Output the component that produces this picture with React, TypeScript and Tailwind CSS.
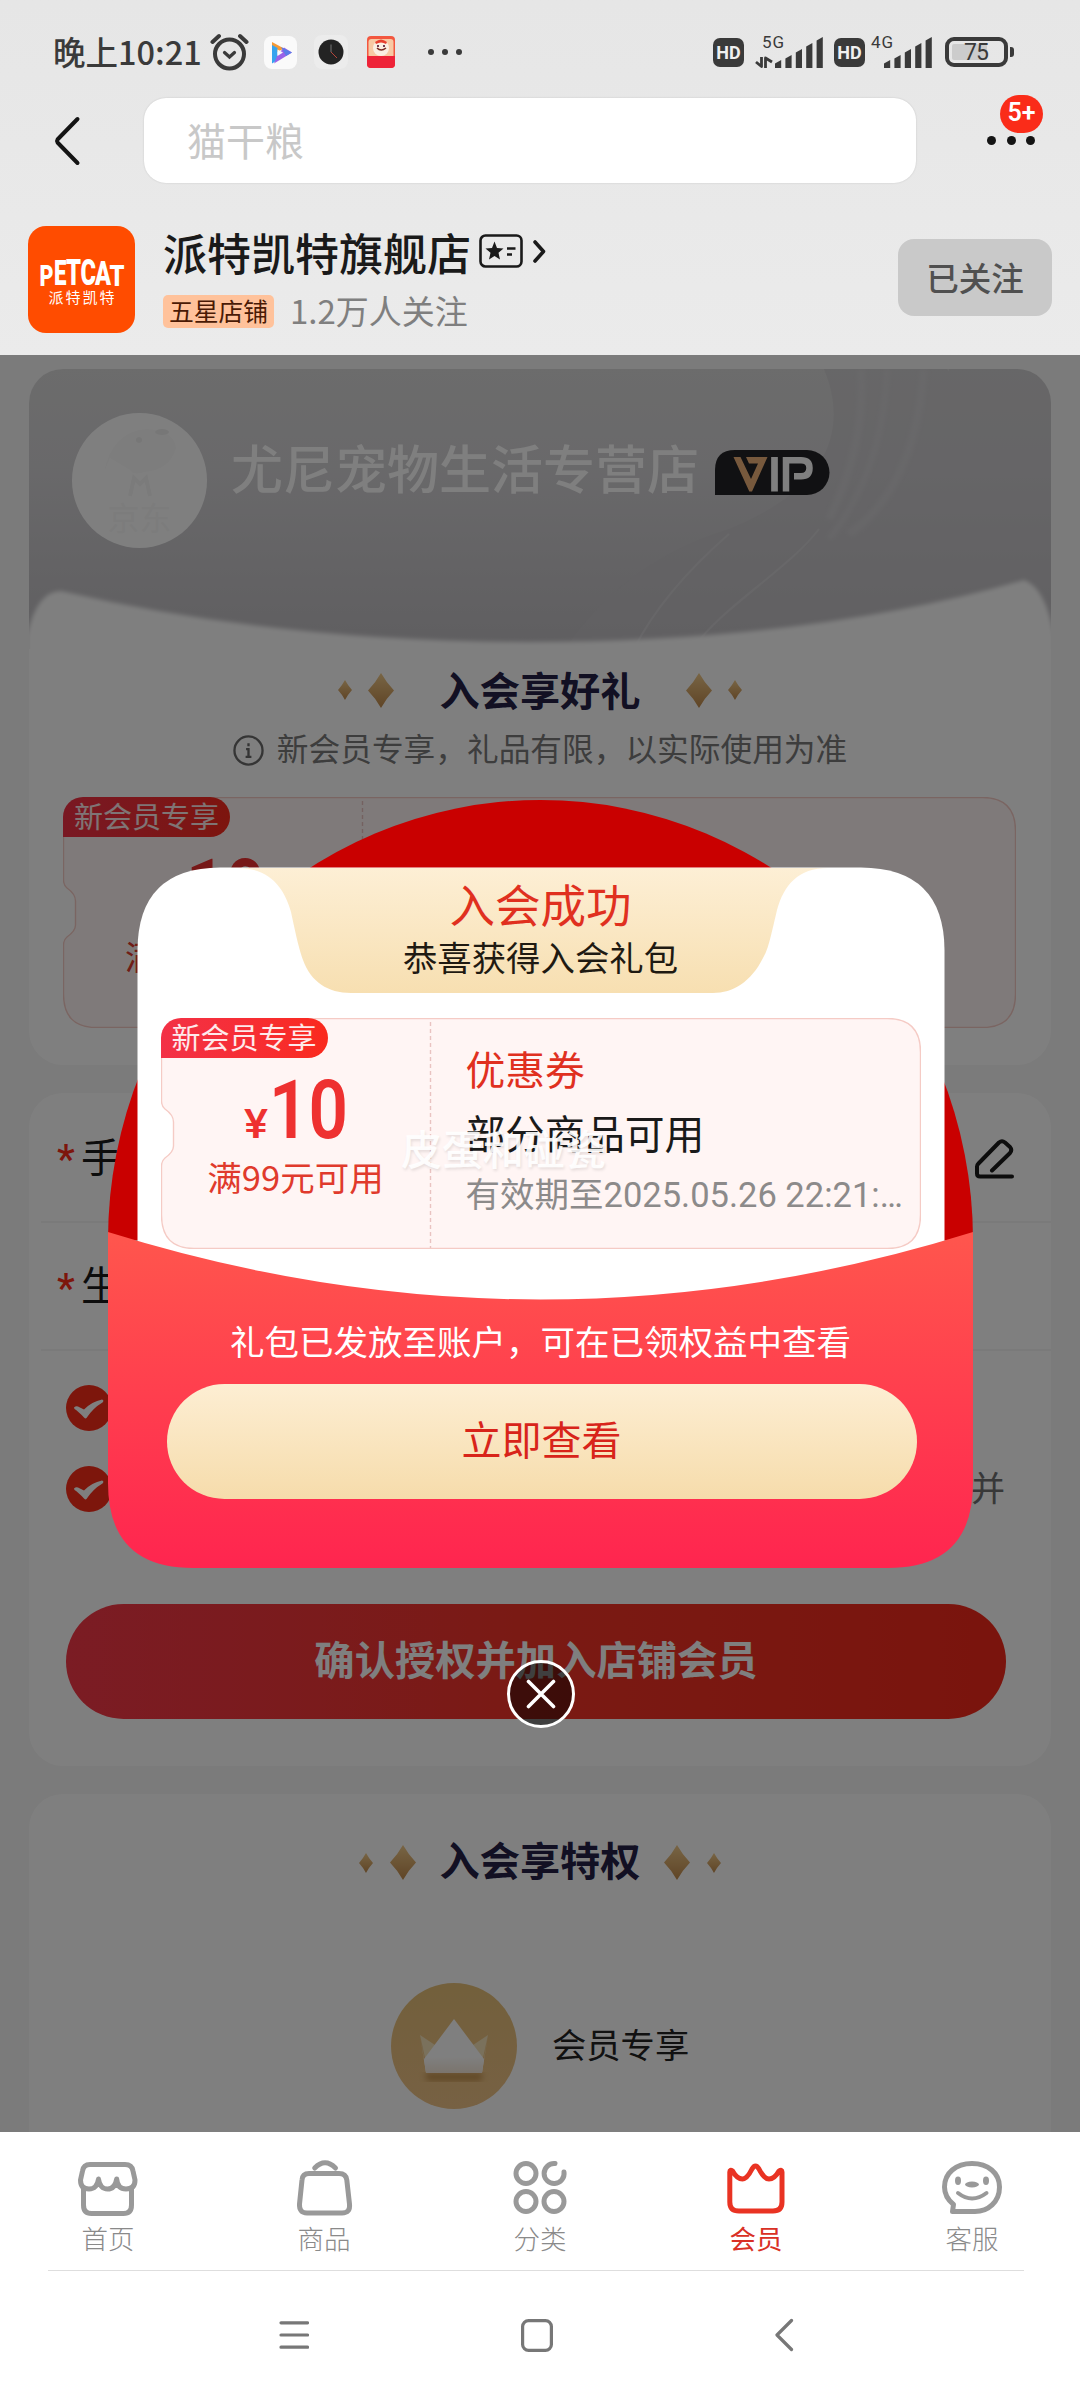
import React from "react";

function Hd() {
  return (
    <div className="flex h-[29px] w-[31px] items-center justify-center rounded-[7px] bg-[#3a3a3a] font-['Roboto',sans-serif] text-[18px] leading-[29px] font-bold text-[#f0f0f0]">
      HD
    </div>
  );
}

function Signal({ label, arrows }: { label: string; arrows?: boolean }) {
  const w = arrows ? 67 : 61;
  const start = arrows ? 19 : 13;
  return (
    <svg className="overflow-visible" width={w} height="36" viewBox={`0 0 ${w} 36`} fill="#3a3a3a">
      <text x={arrows ? 6 : 0} y="13.5" fontSize="17" fontFamily="Roboto, sans-serif" textLength="22">
        {label}
      </text>
      {arrows && (
        <path d="M0 28 L5.500 32.500 V23 M9.5 34 V24 L16 28" fill="none" stroke="#3a3a3a" strokeWidth="2.8" strokeLinejoin="round" />
      )}
      {[26, 21, 15, 9, 3].map((y, i) => (
        <path
          key={i}
          d={`M${start + i * 10.4} ${y + 3.5} L${start + i * 10.4 + 6.2} ${y} V34 H${start + i * 10.4} Z`}
          strokeLinejoin="round"
        />
      ))}
    </svg>
  );
}

function StatusBar() {
  return (
    <div className="mt-[30px] flex h-[44px] items-center pr-[66px] pl-[53px] text-[#3a3a3a]">
      <span className="-mt-[2px] w-[157px] text-[32.500px] leading-[40px] font-medium whitespace-nowrap">晚上10:21</span>
      <svg width="39" height="38" viewBox="0 0 39 38" fill="none" stroke="#3a3a3a" strokeLinecap="round">
        <circle cx="19.5" cy="21" r="14.5" strokeWidth="4" />
        <path d="M14.5 19.5 L19.5 24 L24.5 19.5" strokeWidth="3.2" />
        <path d="M2.5 9 L9 3 M36.500 9 L30 3" strokeWidth="4" />
      </svg>
      <svg className="ml-[15px]" width="33" height="33" viewBox="0 0 33 33">
        <rect width="33" height="33" rx="8" fill="#fafafa" />
        <path d="M8 6 L20 12.500 L13 16 L8 13Z" fill="#f79a35" />
        <path d="M8 9 L13.500 12 V24 L8 27.500Z" fill="#36a3ee" />
        <path d="M20 11.500 L28 16.500 L10 27.500 L13.500 19Z" fill="#9a63e8" />
        <path d="M17 11 L28 16.500 L22 20Z" fill="#5a7de8" />
        <path d="M13.500 13.500 L19 16.500 L13.500 20Z" fill="#fafafa" />
      </svg>
      <svg className="ml-[17px]" width="34" height="34" viewBox="0 0 34 34">
        <rect width="34" height="34" rx="8" fill="#ececec" />
        <circle cx="17" cy="17" r="12.500" fill="#232323" />
        <path d="M17 9.500 V17" stroke="#777" strokeWidth="1" />
        <path d="M17 17 L23 23" stroke="#b5443a" strokeWidth="1" />
      </svg>
      <svg className="ml-[18px]" width="31" height="34" viewBox="0 0 31 34">
        <rect x="1" y="1" width="28" height="32" rx="4" fill="#f3573f" />
        <rect x="2.500" y="4" width="25" height="19" rx="3" fill="#f8c9a4" />
        <circle cx="15" cy="13" r="8" fill="#fbeee2" />
        <path d="M9 7 Q15 2 21 7 L20 9 Q15 6 10 9Z" fill="#e8402f" />
        <path d="M11 13 Q15 17 20 13" stroke="#7a2a22" strokeWidth="1.500" fill="none" />
        <circle cx="12" cy="11" r="1" fill="#402" />
        <circle cx="18" cy="11" r="1" fill="#402" />
        <path d="M1 21 H29 V29 Q29 33 25 33 H5 Q1 33 1 29Z" fill="#ee2338" />
      </svg>
      <div className="ml-[31px] flex gap-[8px]">
        <i className="size-[6px] rounded-full bg-[#3a3a3a]" />
        <i className="size-[6px] rounded-full bg-[#3a3a3a]" />
        <i className="size-[6px] rounded-full bg-[#3a3a3a]" />
      </div>
      <div className="ml-auto flex items-center">
        <Hd />
        <div className="ml-[12px]"><Signal label="5G" arrows /></div>
        <div className="ml-[11px]"><Hd /></div>
        <div className="ml-[6px]"><Signal label="4G" /></div>
        <div className="ml-[13px] flex h-[30px] w-[63px] items-center rounded-[9px] border-4 border-[#3a3a3a] p-[3px]">
          <div className="flex h-[16px] w-[35px] items-center rounded-[2px] bg-[#cccccc] pl-[12px]">
            <span className="pt-[2px] font-['Roboto',sans-serif] text-[23px] leading-[24px] tracking-[-1px]">75</span>
          </div>
        </div>
        <i className="ml-[2px] h-[10px] w-[4px] rounded-r-[3px] bg-[#3a3a3a]" />
      </div>
    </div>
  );
}

function Header() {
  return (
    <header className="flex h-[355px] shrink-0 flex-col bg-linear-to-b from-[#e6e6e6] to-[#ebebeb]">
      <StatusBar />
      <div className="mt-[24px] flex h-[85px] items-center pl-[53px]">
        <svg width="28" height="52" viewBox="0 0 28 52" fill="none" stroke="#141414" strokeWidth="4" strokeLinecap="round" strokeLinejoin="round">
          <path d="M24.500 4 L4.500 24.500 Q3.500 26 4.500 27.500 L24.500 48" />
        </svg>
        <div className="ml-[63px] flex h-[85px] w-[772px] items-center rounded-[22px] bg-white pb-[3px] pl-[43px] text-[39px] leading-[50px] text-[#c8c8c8] shadow-[0_0_2px_rgba(0,0,0,0.15)]">
          猫干粮
        </div>
        <div className="relative ml-[71px] flex h-[85px] items-center gap-[10.500px]">
          <i className="size-[9px] rounded-full bg-[#141414]" />
          <i className="size-[9px] rounded-full bg-[#141414]" />
          <i className="size-[9px] rounded-full bg-[#141414]" />
          <span className="absolute -top-[3px] left-[13px] h-[38px] w-[43px] rounded-full bg-[#fa2c19] text-center font-['Roboto',sans-serif] text-[25px] leading-[35px] font-semibold text-white">
            5+
          </span>
        </div>
      </div>
      <div className="mt-[43px] flex h-[107px] pl-[28px]">
        <div className="flex h-[107px] w-[107px] flex-col items-center rounded-[18px] bg-[#ff4c00] pt-[28px] text-white">
          <svg className="overflow-visible" width="87" height="32" viewBox="0 0 87 32" fill="#fff" fontFamily="Roboto, sans-serif" fontWeight="900">
            <text x="1.500" y="31.500" fontSize="30" textLength="14" lengthAdjust="spacingAndGlyphs">P</text>
            <text x="16" y="31" fontSize="35" textLength="12.500" lengthAdjust="spacingAndGlyphs">E</text>
            <text x="28" y="30.500" fontSize="37" textLength="15" lengthAdjust="spacingAndGlyphs">T</text>
            <text x="42.500" y="30.500" fontSize="36" textLength="15.500" lengthAdjust="spacingAndGlyphs">C</text>
            <text x="57" y="31" fontSize="33" textLength="16" lengthAdjust="spacingAndGlyphs">A</text>
            <text x="71.500" y="31.500" fontSize="30" textLength="15" lengthAdjust="spacingAndGlyphs">T</text>
          </svg>
          <span className="mt-[2px] pl-[2px] text-[15px] leading-[18px] tracking-[2px]">派特凯特</span>
        </div>
        <div className="ml-[28px] flex flex-col">
          <div className="flex h-[54px] items-center">
            <span className="-mt-[2px] text-[44px] leading-[54px] font-medium text-[#1a1a1a]">派特凯特旗舰店</span>
            <svg className="-mt-[4px] ml-[8px]" width="69" height="34" viewBox="0 0 69 34">
              <rect x="1.500" y="1.500" width="41" height="31" rx="5" fill="none" stroke="#1a1a1a" strokeWidth="2.600" />
              <path d="M15.500 7.500 L18 14 L24.500 14.500 L19.500 18.800 L21 25.500 L15.500 22 L10 25.500 L11.500 18.800 L6.500 14.500 L13 14Z" fill="#1a1a1a" />
              <path d="M28 14.500 H36.500 M28 20.500 H33" stroke="#1a1a1a" strokeWidth="2.400" />
              <path d="M56 8 L64.500 17.500 L56 27" fill="none" stroke="#1a1a1a" strokeWidth="3.600" strokeLinecap="round" strokeLinejoin="round" />
            </svg>
          </div>
          <div className="mt-[15px] flex h-[33px] items-center">
            <span className="flex h-[33px] w-[111px] items-center justify-center rounded-[5px] bg-[#ffc29b] pb-[3px] text-[24.800px] leading-[28px] text-[#4a1a05]">五星店铺</span>
            <span className="-mt-[4px] ml-[16px] text-[33px] leading-[36px] text-[#7f7f7f]">1.2万人关注</span>
          </div>
        </div>
        <div className="mt-[13px] mr-[28px] ml-auto flex h-[77px] w-[154px] items-center justify-center rounded-[16px] bg-[#c9c9c9] text-[32.500px] font-medium text-[#505050]">
          <span className="-mt-[1px]">已关注</span>
        </div>
      </div>
    </header>
  );
}

function Diamond({ w, h }: { w: number; h: number }) {
  return (
    <svg width={w} height={h} viewBox="0 0 26 34" preserveAspectRatio="none">
      <defs>
        <linearGradient id="gold" x1="0" y1="0" x2="0" y2="1">
          <stop offset="0" stopColor="#f0ca8a" />
          <stop offset="1" stopColor="#c08a4c" />
        </linearGradient>
      </defs>
      <path d="M13 0 Q18.500 9.500 26 17 Q18.500 24.500 13 34 Q7.500 24.500 0 17 Q7.500 9.500 13 0Z" fill="url(#gold)" />
    </svg>
  );
}

function SectionTitle({ text, wide }: { text: string; wide?: boolean }) {
  return (
    <div className="flex h-[40px] items-center justify-center">
      <div className={wide ? "mr-[46px] flex items-center gap-[16px]" : "mr-[24px] flex items-center gap-[17px] pt-[5px]"}>
        <Diamond w={14} h={20} />
        <Diamond w={26} h={35} />
      </div>
      <span className="-mt-[2px] text-[40.200px] leading-[40px] font-bold text-[#242046]">{text}</span>
      <div className={wide ? "ml-[46px] flex items-center gap-[16px]" : "ml-[24px] flex items-center gap-[17px] pt-[5px]"}>
        <Diamond w={26} h={35} />
        <Diamond w={14} h={20} />
      </div>
    </div>
  );
}

function Coupon({ width, left }: { width: number; left: number }) {
  const r = width - 0.5;
  return (
    <div className="relative h-[231px]" style={{ width }}>
      <svg className="absolute inset-0" width={width} height="231">
        <path
          d={`M33 .5 H${r - 33} Q${r} .5 ${r} 34 V197 Q${r} 230.500 ${r - 33} 230.500 H33 Q.5 230.500 .5 197 V148 Q.5 143 4 140 Q12.500 134 12.500 128 V104 Q12.500 97 4 91 Q.5 88 .5 83 V33 Q.5 .5 33 .5Z`}
          fill="#fff5f4"
          stroke="#f5cbc5"
          strokeWidth="1.400"
        />
        <path d={`M${left - 0.5} 4 V230`} stroke="#e9c3c1" strokeWidth="1.400" strokeDasharray="4 3" />
      </svg>
      <div className="relative flex h-full">
        <div className="flex shrink-0 flex-col items-center" style={{ width: left }}>
          <span className="h-[40px] w-[167px] self-start rounded-tl-[20px] rounded-r-[20px] bg-linear-to-r from-[#f33146] to-[#fa2a1c] pl-[11px] text-[29px] leading-[37px] text-white/90">
            新会员专享
          </span>
          <svg className="mt-[12px] mr-[2px] overflow-visible" width="104" height="72" viewBox="0 0 104 72" fill="#ee3130" fontFamily="Roboto, sans-serif">
            <text x="1" y="67.500" fontSize="40" fontWeight="500" textLength="24" lengthAdjust="spacingAndGlyphs">¥</text>
            <text x="26" y="68" fontSize="82" fontWeight="600" textLength="79" lengthAdjust="spacingAndGlyphs">10</text>
          </svg>
          <span className="mt-[14px] text-[34.500px] leading-[40px] text-[#e03a2c]">满99元可用</span>
        </div>
        <div className="flex flex-col pt-[29px] pl-[35px] whitespace-nowrap">
          <span className="text-[39.800px] leading-[42px] text-[#e0301f]">优惠券</span>
          <span className="mt-[22px] text-[39.800px] leading-[42px] text-[#1a1a1a]">部分商品可用</span>
          <span className="mt-[20px] font-['Roboto','Noto_Sans_CJK_SC',sans-serif] text-[34.500px] leading-[44px] text-[#8c8a8a]">
            有效期至2025.05.26 22:21:…
          </span>
        </div>
      </div>
    </div>
  );
}

function HeroArt() {
  return (
    <svg className="absolute inset-0" width="1023" height="280" viewBox="0 0 1023 280">
      <defs>
        <linearGradient id="hero" x1="0" y1="0" x2="0" y2="1">
          <stop offset="0" stopColor="#d8d8d8" />
          <stop offset=".35" stopColor="#d3d2d5" />
          <stop offset="1" stopColor="#bfbdc1" />
        </linearGradient>
        <filter id="soft"><feGaussianBlur stdDeviation="2" /></filter>
      </defs>
      <path d="M0 27 Q0 0 27 0 H996 Q1023 0 1023 27 V280 H0Z" fill="url(#hero)" />
      <path d="M795 0 C820 60 800 120 700 160 C620 185 570 230 536 280 H1023 V0 H920 C918 40 925 0 917 0Z" fill="#c6c4c8" opacity=".5" />
      <g fill="none" stroke="#dcdbde" opacity=".35" filter="url(#soft)">
        <path d="M832 0 C836 60 820 110 800 150" strokeWidth="8" />
        <path d="M858 0 C856 60 840 120 800 170" strokeWidth="6" />
        <path d="M895 0 C890 70 870 130 820 165" strokeWidth="8" />
      </g>
      <g fill="none" stroke="#dcdbde" strokeWidth="2" opacity=".45">
        <path d="M700 165 C660 200 625 240 605 280" />
        <path d="M790 160 C760 200 690 240 664 280" />
      </g>
      <path d="M-2 285 V266 Q8 222 32 222 Q250 273 500 273 Q780 273 995 211 Q1016 218 1025 266 V285Z" fill="#fff" filter="url(#soft)" />
    </svg>
  );
}

function MemberCard() {
  return (
    <section className="relative h-[696px] shrink-0 overflow-hidden rounded-[34px] bg-white">
      <HeroArt />
      <div className="relative flex h-full flex-col">
        <div className="mt-[44px] ml-[43px] flex h-[135px]">
          <div className="flex size-[135px] flex-col items-center rounded-full bg-white">
            <svg className="mt-[13px]" width="80" height="72" viewBox="0 0 80 72">
              <path d="M4 46 Q12 6 46 3 Q74 4 76 22 Q70 44 44 46 Q34 50 30 44 L10 32 Z" fill="#fbfbfb" />
              <circle cx="39" cy="14" r="3" fill="#efefef" />
              <ellipse cx="62" cy="6" rx="7" ry="3" fill="#efefef" />
              <path d="M30 70 L34 52 L40 58 L46 52 L50 70" fill="none" stroke="#f6f6f6" strokeWidth="4" />
            </svg>
            <span className="text-[32px] leading-[36px] text-[#f8f8f8]">京东</span>
          </div>
          <span className="mt-[24px] ml-[24px] text-[52px] leading-[60px] font-medium whitespace-nowrap text-white">尤尼宠物生活专营店</span>
          <svg className="mt-[37px] ml-[16px]" width="115" height="45" viewBox="0 0 115 45">
            <path d="M20 0 H92 A22.500 22.500 0 0 1 92 45 H0 V20 Q0 0 20 0Z" fill="#232326" />
            <path d="M18.500 7 H25.500 L36 29 L43 13.500 H34 L31 7 H52.500 L37 41.500 H34.300Z" fill="#efb27a" />
            <path d="M59.500 7 V41.500" stroke="#fff" strokeWidth="6.700" />
            <path d="M71 41.500 V10.300 H86 Q94.500 10.300 94.500 18 Q94.500 26.300 86 26.300 H79" fill="none" stroke="#fff" strokeWidth="6.500" />
          </svg>
        </div>
        <div className="mt-[122px]"><SectionTitle text="入会享好礼" wide /></div>
        <div className="mt-[21px] flex h-[34px] items-center justify-center gap-[13px] text-[31.700px] leading-[34px] text-[#7a7a7a]">
          <svg className="mt-[4px]" width="31" height="33" viewBox="0 0 32 32" fill="none" stroke="#6a6a6a" strokeWidth="2.400">
            <circle cx="16" cy="16" r="14.500" />
            <path d="M16 8.500 V11.500 M13.500 14.500 H16 V22.500 M13 22.500 H19" />
          </svg>
          <span className="-mt-[3px]">新会员专享，礼品有限，以实际使用为准</span>
        </div>
        <div className="mt-[32px] ml-[34px]"><Coupon width={953} left={300} /></div>
      </div>
    </section>
  );
}

function Check() {
  return (
    <svg className="shrink-0" width="46" height="46" viewBox="0 0 46 46">
      <circle cx="23" cy="23" r="23" fill="#fa2c19" />
      <path d="M8 22.500 Q10 20.500 12 21.500 L18 24.500 Q26 16.500 36 14.500 Q38.500 15.500 36.500 17.500 Q27 23 20.500 33 Q19.500 34 18 32.500 Q12 26 8.500 24Z" fill="#fff" />
    </svg>
  );
}

function Asterisk() {
  return <span className="mt-[5px] w-[24px] font-['Roboto',sans-serif] font-medium text-[#fa2c19]">*</span>;
}

function FormCard() {
  return (
    <section className="flex h-[673px] shrink-0 flex-col rounded-[34px] bg-white">
      <div className="ml-[12px] flex h-[130px] items-center border-b-2 border-[#f5f5f5] pr-[37px] pl-[16px] text-[40px] leading-[44px]">
        <Asterisk />
        <span className="-mt-[5px] text-[#1a1a1a]">手机号</span>
        <svg className="mt-[3px] ml-auto" width="39" height="40" viewBox="0 0 39 40" fill="none" stroke="#1a1a1a" strokeWidth="4" strokeLinecap="round" strokeLinejoin="round">
          <path d="M37 37.500 H5 Q2 37.500 2 34.500 V27.500 Q2 26 3.500 24.500 L24 3.500 Q27 1 30 3.500 L35 8 Q37.500 11 35 14 L17 31.500" />
        </svg>
      </div>
      <div className="ml-[12px] flex h-[128px] items-center border-b-2 border-[#f5f5f5] pl-[16px] text-[40px] leading-[44px]">
        <Asterisk />
        <span className="-mt-[6px] text-[#1a1a1a]">生日</span>
      </div>
      <div className="mt-[34px] flex h-[46px] items-center pl-[37px]"><Check /></div>
      <div className="mt-[35px] flex h-[46px] items-center justify-between pr-[46px] pl-[37px]">
        <Check />
        <span className="-mt-[5px] text-[34px] leading-[40px] text-[#707070]">并</span>
      </div>
      <div className="mt-[92px] ml-[37px] flex h-[115px] w-[940px] items-center justify-center rounded-full bg-linear-to-r from-[#f63848] via-[#f53427] to-[#f5281a] text-[40.300px] leading-[44px] font-bold text-white">
        <span className="-mt-[7px]">确认授权并加入店铺会员</span>
      </div>
    </section>
  );
}

function PrivilegeCard() {
  return (
    <section className="flex h-[340px] shrink-0 flex-col rounded-t-[34px] bg-white pt-[46px]">
      <SectionTitle text="入会享特权" />
      <div className="mt-[103px] flex h-[126px] items-center pl-[362px]">
        <svg width="126" height="126" viewBox="0 0 126 126">
          <defs>
            <linearGradient id="coin" x1="0" y1="0" x2="0" y2="1">
              <stop offset="0" stopColor="#e6c078" />
              <stop offset="1" stopColor="#eec287" />
            </linearGradient>
            <linearGradient id="crown" x1="0" y1="0" x2="0" y2="1">
              <stop offset="0.700" stopColor="#fff" />
              <stop offset="1" stopColor="#f6e9da" />
            </linearGradient>
            <filter id="shade"><feGaussianBlur stdDeviation="3" /></filter>
          </defs>
          <circle cx="63" cy="63" r="63" fill="url(#coin)" />
          <path d="M34 90 H92 L90 98 H36Z" fill="#b07b36" opacity=".7" filter="url(#shade)" />
          <path d="M29 52 L47 64 L36 84 Z M97 52 L79 64 L90 84 Z" fill="#f4e2b9" />
          <path d="M29 52 L35 90 L44 90 L33 76 Z M97 52 L91 90 L82 90 L93 76Z" fill="#fff" />
          <path d="M33 76 L63 36 L93 76 L91 90 H35Z" fill="url(#crown)" />
        </svg>
        <span className="-mt-[6px] ml-[35px] text-[34.300px] leading-[40px] text-[#222]">会员专享</span>
      </div>
    </section>
  );
}

function SuccessDialog() {
  return (
    <div className="absolute top-[800px] left-[108px] flex w-[865px] flex-col items-center">
      <div className="relative flex h-[768px] w-[865px] flex-col items-center">
        <svg className="absolute inset-0" width="865" height="768" viewBox="0 0 865 768">
          <defs>
            <linearGradient id="cream" x1="0" y1="0" x2="0" y2="1">
              <stop offset="0" stopColor="#fdefd5" />
              <stop offset="1" stopColor="#f7dfb1" />
            </linearGradient>
            <linearGradient id="pocket" x1="0" y1="0" x2="0" y2="1">
              <stop offset="0" stopColor="#ff564d" />
              <stop offset="1" stopColor="#ff254f" />
            </linearGradient>
          </defs>
          <path d="M0 440 A432.500 440 0 0 1 865 440 Z" fill="#c90000" />
          <path d="M29.500 500 V150 Q30 68 112 67.500 H753 Q836 68 836.500 150 V500 Z" fill="#fff" />
          <path d="M130 68 H720 C690 68 676 85 669 110 C662 140 660 150 655 158 C643 182 625 193 605 193 H243 C220 193 203 182 195 160 C190 145 188 135 183 112 C177 90 163 68 130 68Z" fill="url(#cream)" />
          <path d="M0 432 Q432.500 567 865 432 V683 Q865 768 780 768 H85 Q0 768 0 683Z" fill="url(#pocket)" />
        </svg>
        <div className="relative flex flex-col items-center">
          <h2 className="mt-[78px] text-[45.500px] leading-[50px] text-[#e0301f]">入会成功</h2>
          <p className="mt-[7px] text-[34.400px] leading-[42px] text-[#1f1a12]">恭喜获得入会礼包</p>
          <div className="mt-[41px]"><Coupon width={760} left={270} /></div>
          <p className="mt-[69px] text-[34.500px] leading-[44px] text-white">礼包已发放至账户，可在已领权益中查看</p>
          <div className="mt-[22px] ml-[2px] flex h-[115px] w-[750px] items-center justify-center rounded-full bg-linear-to-b from-[#fdeed3] to-[#f6dcab] text-[40px] leading-[44px] text-[#d8241a]">
            <span className="-mt-[8px]">立即查看</span>
          </div>
        </div>
        <span className="absolute top-[323px] left-[293px] text-[41px] leading-[48px] font-medium whitespace-nowrap text-white/90 [text-shadow:1px_2px_3px_rgba(0,0,0,0.1)]">
          皮蛋和碰瓷
        </span>
      </div>
      <div className="mt-[92px] flex size-[68px] items-center justify-center rounded-full border-3 border-white bg-black/50">
        <svg width="30" height="30" viewBox="0 0 30 30" stroke="#fff" strokeWidth="3.600" strokeLinecap="round">
          <path d="M2.500 2.500 L27.500 27.500 M27.500 2.500 L2.500 27.500" />
        </svg>
      </div>
    </div>
  );
}

const tabs = [
  {
    label: "首页",
    icon: (
      <>
        <path d="M12 4.500 H47 Q54 4.500 55 11 L57 20 Q57 29 48 29 Q39.500 29 38.700 19 Q37 29 29.600 29 Q22 29 20.500 19 Q19 29 11 29 Q2.500 29 2.500 20 L4.500 11 Q5.500 4.500 12 4.500Z" />
        <path d="M5.500 28 V45 Q5.500 53.500 13.500 53.500 H45.500 Q53.500 53.500 53.500 45 V28" />
      </>
    ),
  },
  {
    label: "商品",
    icon: (
      <>
        <path d="M15 13.500 H45 Q52 13.500 52.800 20 L55.500 44 Q56.500 53 48 53 H13 Q5 53 5.500 44 L8 20 Q8.500 13.500 15 13.500Z" />
        <path d="M20.700 8 Q31 -2.500 41.500 8" />
      </>
    ),
  },
  {
    label: "分类",
    icon: (
      <>
        <circle cx="16" cy="13.500" r="10" />
        <path d="M45 3.500 A10 10 0 1 0 54 12" />
        <circle cx="16" cy="41.500" r="10" />
        <circle cx="44" cy="41.500" r="10" />
      </>
    ),
  },
  {
    label: "会员",
    active: true,
    icon: (
      <path d="M3.800 12 Q3.800 9 6.500 11 Q11 19 16.500 19 Q21 19 26 9 Q29.500 3 33 9 Q38 19 43 19 Q48.500 19 53 11 Q56 9 56 12 V42 Q56 51 47 51 H13 Q3.800 51 3.800 42Z" />
    ),
  },
  {
    label: "客服",
    icon: (
      <>
        <path d="M30 3.500 C46 3.500 57.500 13 57.500 27 C57.500 42 46 51.500 33 51.500 H10.500 L11.500 44.500 C6 40 2.500 34 2.500 27 C2.500 13 14 3.500 30 3.500Z" />
        <g fill="#999" stroke="none">
          <ellipse cx="16" cy="20.700" rx="3" ry="4.200" />
          <ellipse cx="44" cy="20.700" rx="3" ry="4.200" />
          <ellipse cx="30" cy="24.500" rx="7" ry="2.900" />
        </g>
        <path d="M16 33 Q30 44 44.500 33" strokeWidth="4" />
      </>
    ),
  },
];

function BottomNav() {
  return (
    <footer className="flex h-[268px] shrink-0 flex-col bg-white">
      <nav className="grid h-[138px] grid-cols-5 pt-[28px]">
        {tabs.map((t) => (
          <div key={t.label} className={t.active ? "flex flex-col items-center text-[#e93323]" : "flex flex-col items-center text-[#999]"}>
            <svg width="60" height="60" viewBox="0 0 60 60" fill="none" stroke="currentColor" strokeWidth="5" strokeLinecap="round" strokeLinejoin="round">
              {t.icon}
            </svg>
            <span className={t.active ? "mt-[1px] text-[26.500px] leading-[34px] text-[#d93025]" : "mt-[1px] text-[26.500px] leading-[34px] font-light text-[#8a8a8a]"}>
              {t.label}
            </span>
          </div>
        ))}
      </nav>
      <div className="mr-[56px] ml-[48px] h-px bg-[#dedede]" />
      <div className="mt-[46px] flex h-[36px] items-center pl-[279px]">
        <svg width="30" height="30" viewBox="0 0 30 30" stroke="#777" strokeWidth="3.200" strokeLinecap="round">
          <path d="M2 2.800 H28.500 M2 15 H28.500 M2 27.200 H28.500" />
        </svg>
        <svg className="ml-[212px]" width="32" height="33" viewBox="0 0 32 33" fill="none" stroke="#777" strokeWidth="3.200">
          <rect x="1.600" y="1.600" width="28.800" height="29.800" rx="6" />
        </svg>
        <svg className="ml-[222px]" width="19" height="34" viewBox="0 0 19 34" fill="none" stroke="#777" strokeWidth="3.200" strokeLinecap="round" strokeLinejoin="round">
          <path d="M16.500 2.500 L2 17 L16.500 31.500" />
        </svg>
      </div>
    </footer>
  );
}

export default function App() {
  return (
    <div className="relative flex h-[2400px] w-[1080px] flex-col overflow-hidden bg-white font-['Noto_Sans_CJK_SC',sans-serif]">
      <Header />
      <main className="relative flex h-[1777px] shrink-0 flex-col gap-[28px] overflow-hidden bg-[#f6f6f6] px-[29px] pt-[14px]">
        <MemberCard />
        <FormCard />
        <PrivilegeCard />
        <div className="absolute inset-0 bg-black/50" />
      </main>
      <BottomNav />
      <SuccessDialog />
    </div>
  );
}
